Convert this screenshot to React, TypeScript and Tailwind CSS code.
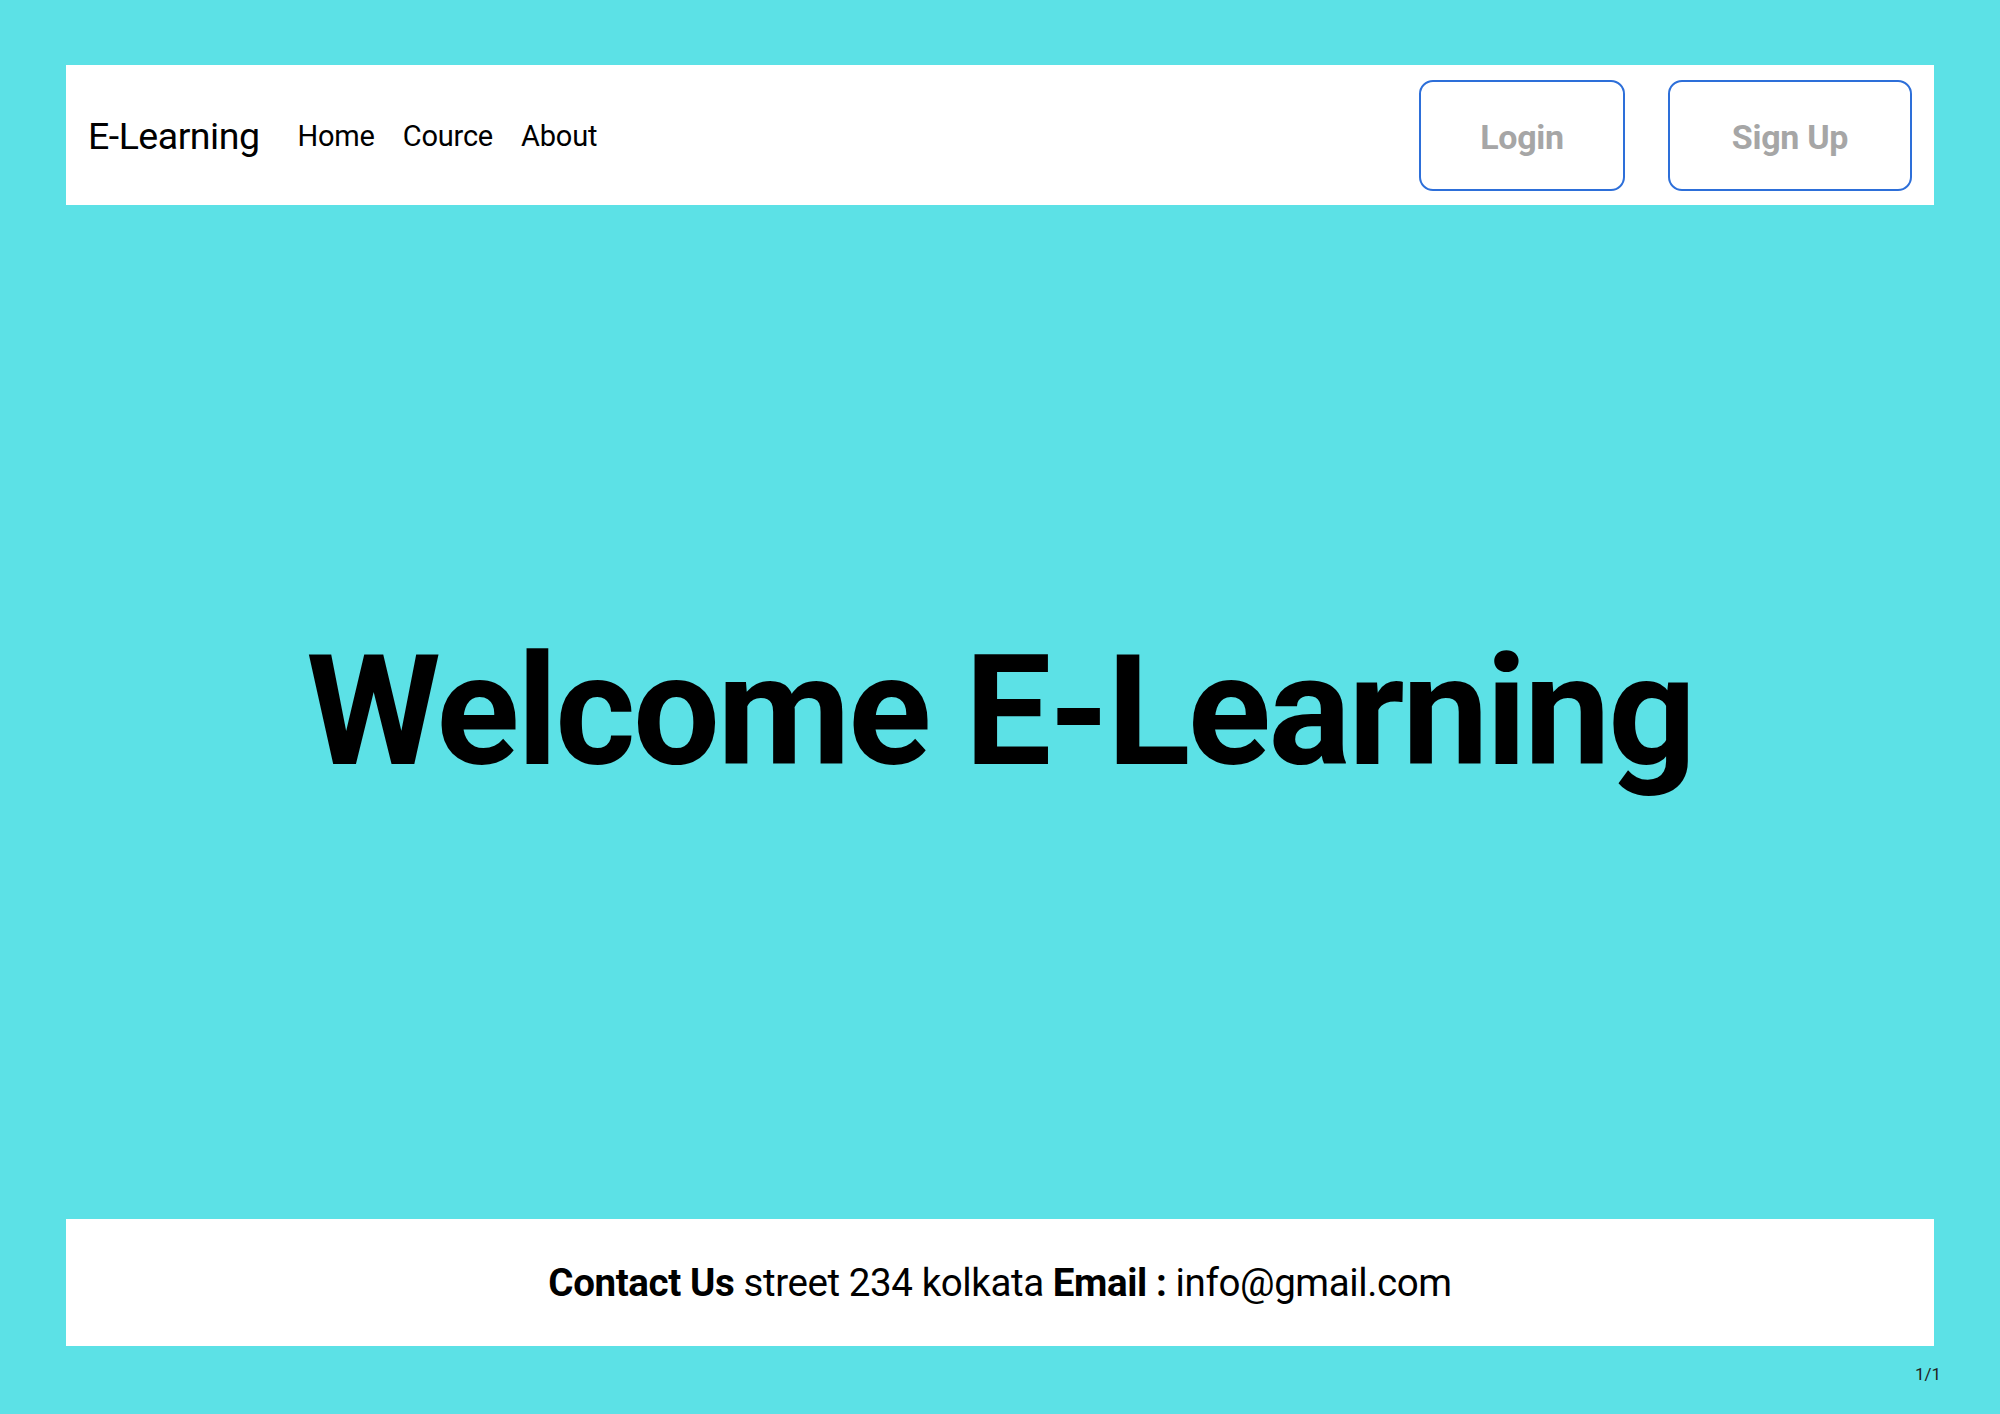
import React from 'react';

const navLinks = ['Home', 'Cource', 'About'];

export default function App() {
  return (
    <div
      className="h-[1414px] w-full bg-[#5ce1e6] flex flex-col text-black"
      style={{ fontFamily: 'Roboto, "Noto Sans", sans-serif' }}
    >
      <header className="mx-[66px] mt-[65px] h-[140px] bg-white flex items-center pl-[22px] pr-[22px]">
        <div className="text-[37.5px] leading-none tracking-[-0.5px] pt-[4px]">E-Learning</div>
        <nav className="flex items-center gap-[28px] ml-[38px] pt-[3px]">
          {navLinks.map((l) => (
            <a key={l} className="text-[29px] leading-none tracking-[-0.2px]">{l}</a>
          ))}
        </nav>
        <div className="ml-auto flex items-center gap-[43px]">
          <button className="w-[206px] h-[111px] rounded-[14px] border-2 border-[#2d6fd9] text-[#a6a6a6] font-bold text-[34px] tracking-[-0.3px] pt-[4px]">
            Login
          </button>
          <button className="w-[244px] h-[111px] rounded-[14px] border-2 border-[#2d6fd9] text-[#a6a6a6] font-bold text-[34px] tracking-[-0.3px] pt-[4px]">
            Sign Up
          </button>
        </div>
      </header>

      <main className="flex-1 flex items-center justify-center">
        <h1 className="text-[154px] font-bold leading-none tracking-[-2.5px]">Welcome E-Learning</h1>
      </main>

      <footer className="mx-[66px] h-[127px] bg-white flex items-center justify-center text-[38.5px] tracking-[-0.4px]">
        <p>
          <span className="font-bold">Contact Us</span> street 234 kolkata <span className="font-bold">Email :</span> info@gmail.com
        </p>
      </footer>
      <div className="h-[68px] flex justify-end pr-[59px] pt-[16px] text-[17px] text-[#222]">1/1</div>
    </div>
  );
}
